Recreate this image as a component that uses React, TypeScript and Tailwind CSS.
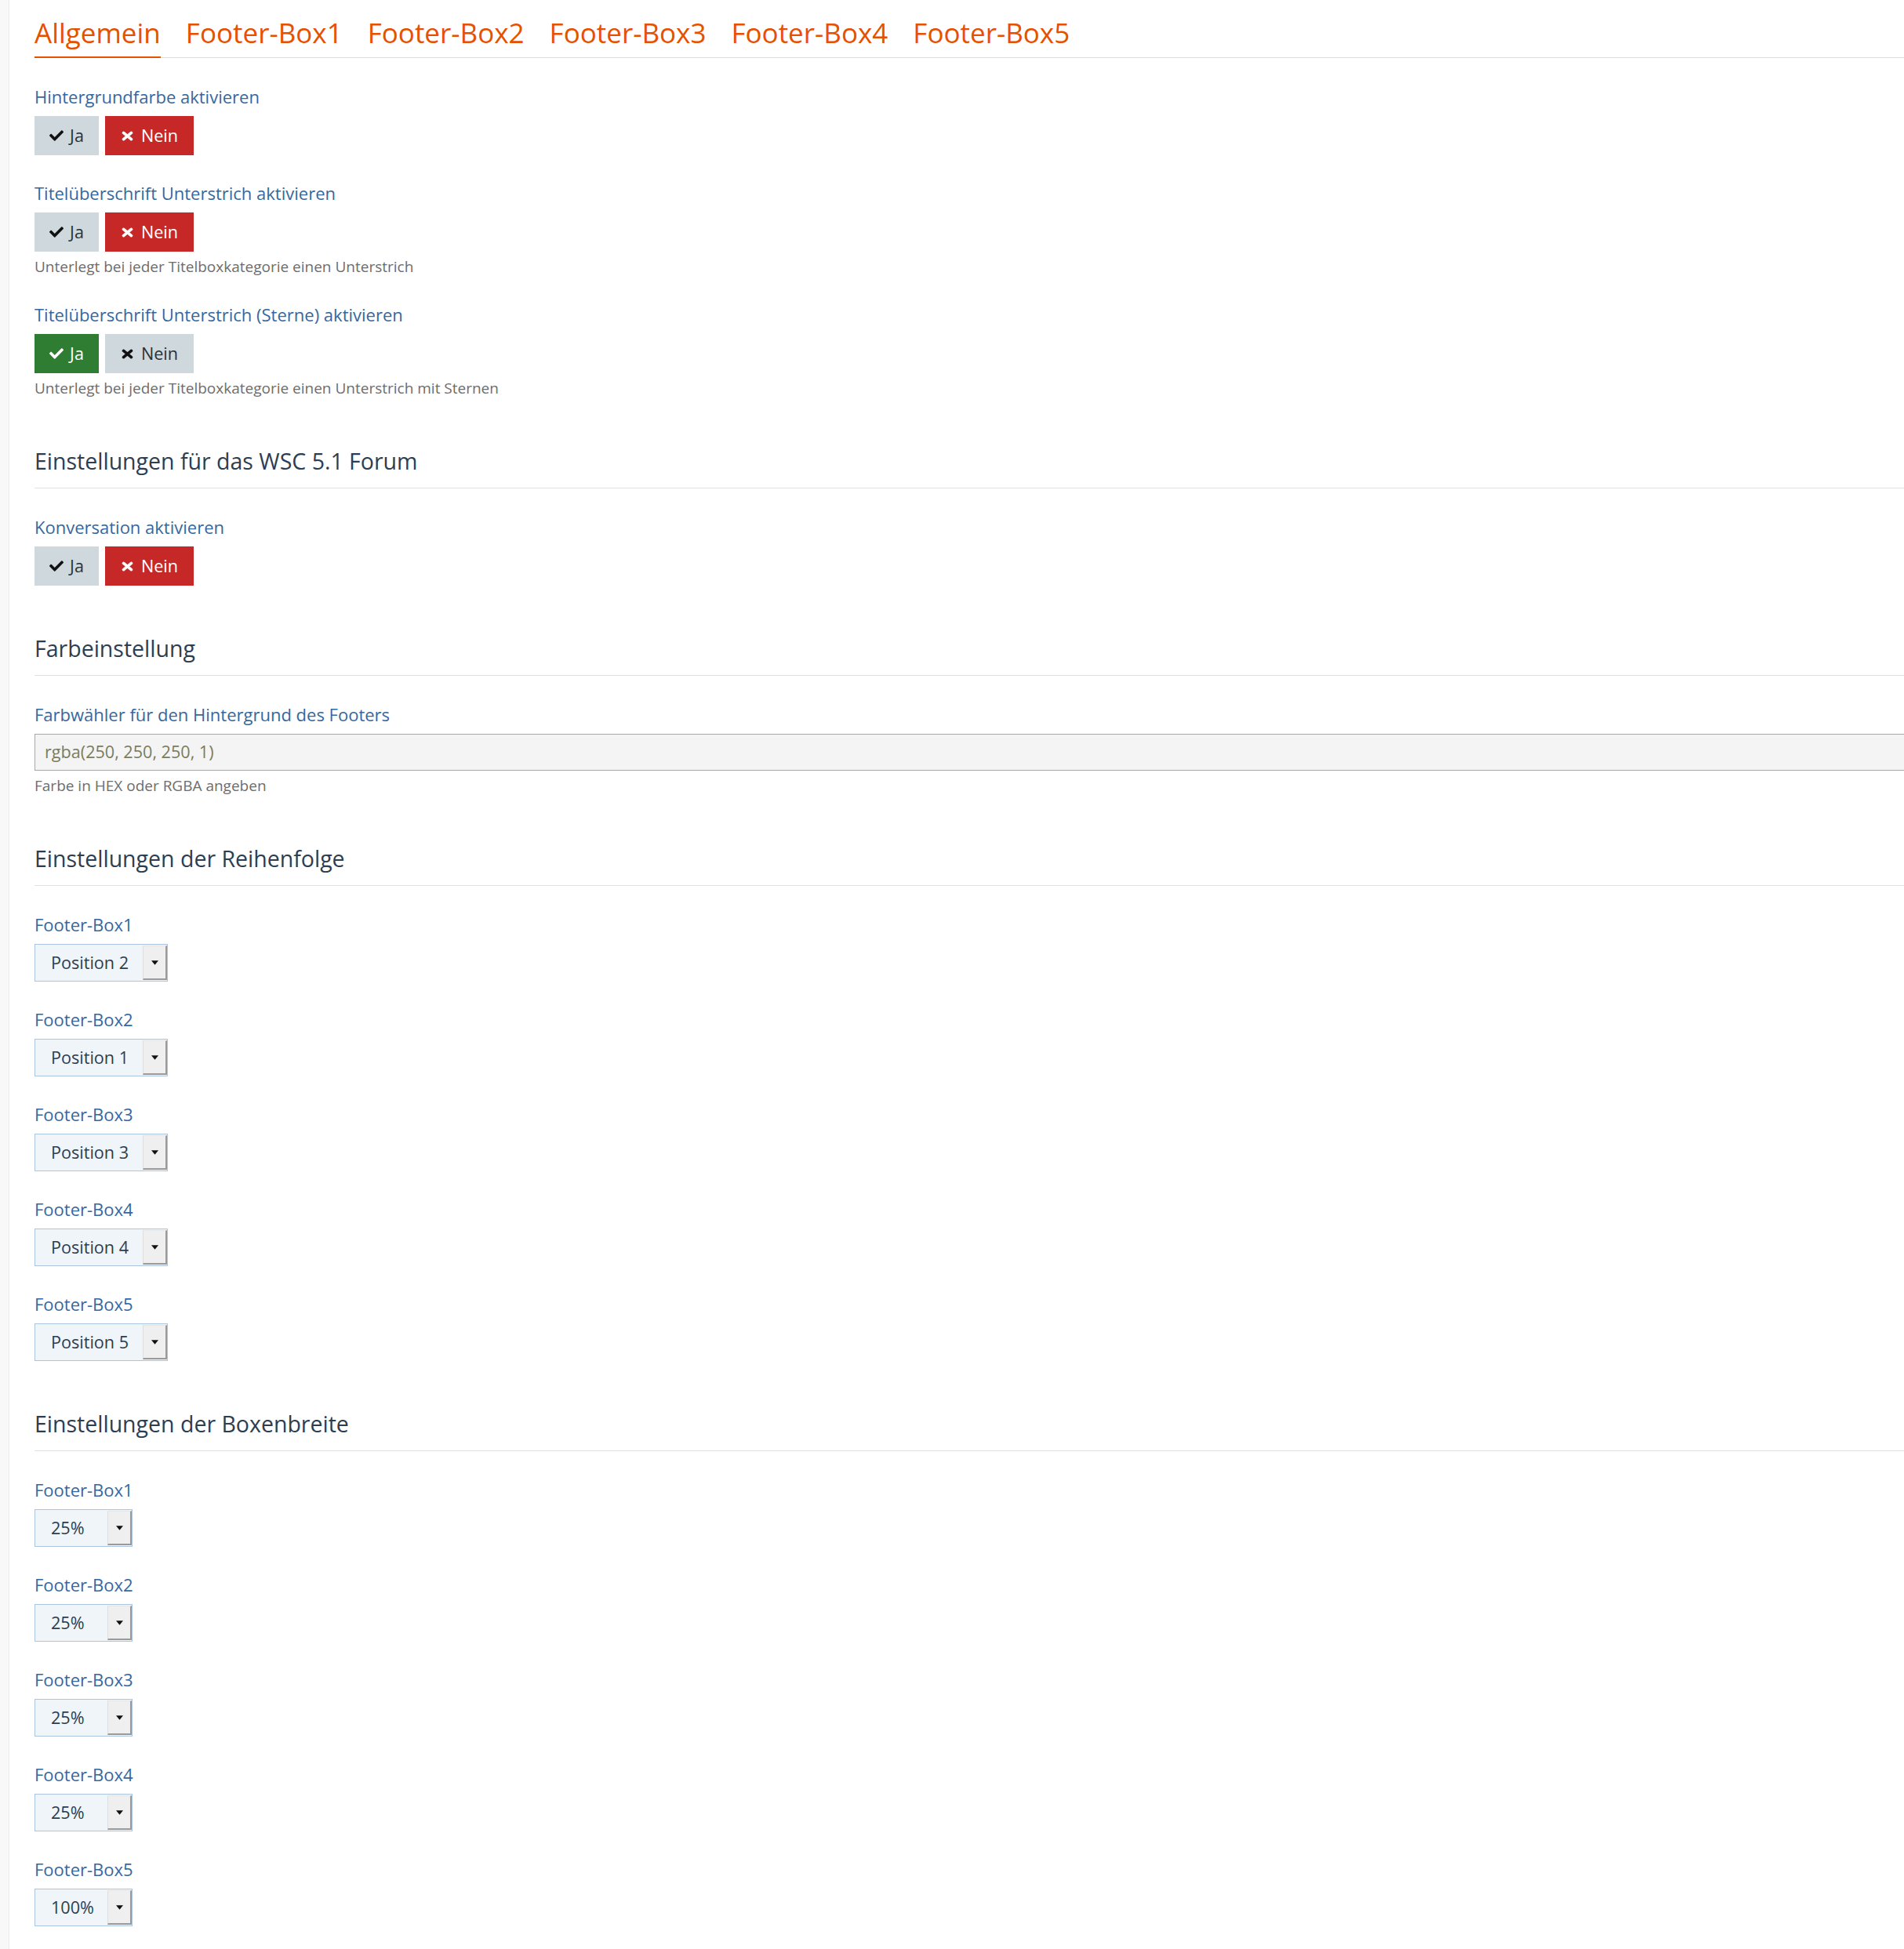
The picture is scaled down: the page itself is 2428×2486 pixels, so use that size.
import { ReactNode } from "react";
import { FaCheck } from "react-icons/fa";

/* ---------------- SMALL PARTS ---------------- */

function TimesIcon({ className }: { className?: string }) {
  return (
    <svg viewBox="0 0 17 14" className={className} aria-hidden>
      <path
        d="M3.2 2.6 L13.8 11.4 M13.8 2.6 L3.2 11.4"
        stroke="currentColor"
        strokeWidth="4"
        strokeLinecap="round"
        fill="none"
      />
    </svg>
  );
}

function Label({ children }: { children: ReactNode }) {
  return (
    <div className="text-[22px] leading-[30px] text-[#35689f]">{children}</div>
  );
}

function Hint({ children }: { children: ReactNode }) {
  return (
    <p className="mt-[6px] text-[19px] leading-[26px] text-[#6d6d6d]">{children}</p>
  );
}

function Toggle({ value }: { value: "ja" | "nein" }) {
  const ja = value === "ja";
  return (
    <div className="mt-[10px] flex gap-[8px] text-[21.6px]">
      <button
        className={
          ja
            ? "flex h-[50px] w-[82px] items-center justify-center gap-[8px] bg-[#2e7d32] text-white"
            : "flex h-[50px] w-[82px] items-center justify-center gap-[8px] bg-[#cfd8dc] text-[#263238]"
        }
      >
        <FaCheck className={ja ? "size-[18px] text-white" : "size-[18px] text-[#111]"} />
        <span>Ja</span>
      </button>
      <button
        className={
          !ja
            ? "flex h-[50px] w-[113px] items-center justify-center gap-[9px] bg-[#c62828] text-white"
            : "flex h-[50px] w-[113px] items-center justify-center gap-[9px] bg-[#cfd8dc] text-[#263238]"
        }
      >
        <TimesIcon className={!ja ? "h-[13px] w-[17px] text-white" : "h-[13px] w-[17px] text-[#111]"} />
        <span>Nein</span>
      </button>
    </div>
  );
}

function Select({ value, wide }: { value: string; wide?: boolean }) {
  return (
    <div
      className={
        wide
          ? "mt-[10px] flex h-[48px] w-[170px] border border-[#abc4e0] bg-[#f0f5fa]"
          : "mt-[10px] flex h-[48px] w-[125px] border border-[#abc4e0] bg-[#f0f5fa]"
      }
    >
      <span className="flex flex-1 items-center pl-[20px] text-[21.6px] text-[#2c3e50]">
        {value}
      </span>
      <span className="my-[1px] flex w-[31px] items-center justify-center border-l border-t border-b-2 border-r-2 border-l-[#dedede] border-t-[#e6e6e6] border-b-[#9a9a9a] border-r-[#9a9a9a] bg-[#efefef]">
        <svg viewBox="0 0 8 5" className="h-[6px] w-[9px]" aria-hidden>
          <path d="M0 0 H8 L4 5 Z" fill="#111" />
        </svg>
      </span>
    </div>
  );
}

function Section({ title, children }: { title: string; children: ReactNode }) {
  return (
    <section className="mt-[60px]">
      <h2 className="border-b border-[#e2e2e2] pb-[14px] text-[28.5px] leading-[40px] text-[#2c3e50]">
        {title}
      </h2>
      <div className="mt-[34px] flex flex-col gap-[33px]">{children}</div>
    </section>
  );
}

/* ---------------- DATA ---------------- */

const tabs = ["Allgemein", "Footer-Box1", "Footer-Box2", "Footer-Box3", "Footer-Box4", "Footer-Box5"];

const order = [
  { box: "Footer-Box1", value: "Position 2" },
  { box: "Footer-Box2", value: "Position 1" },
  { box: "Footer-Box3", value: "Position 3" },
  { box: "Footer-Box4", value: "Position 4" },
  { box: "Footer-Box5", value: "Position 5" },
];

const widths = [
  { box: "Footer-Box1", value: "25%" },
  { box: "Footer-Box2", value: "25%" },
  { box: "Footer-Box3", value: "25%" },
  { box: "Footer-Box4", value: "25%" },
  { box: "Footer-Box5", value: "100%" },
];

/* ---------------- PAGE ---------------- */

export default function App() {
  return (
    <div className="flex min-h-[2486px] bg-white font-['Open_Sans',sans-serif]">
      <div className="w-[12px] shrink-0 border-r border-[#ececec] bg-[#f8f8f8]" />

      <main className="flex-1 pl-[32px] pt-[18px]">
        {/* TABS */}
        <ul className="flex gap-[32px] border-b border-[#dddddd]">
          {tabs.map((t, i) => (
            <li
              key={t}
              className={
                i === 0
                  ? "-mb-px border-b-2 border-[#e65100] pb-[6px] text-[35px] leading-[48px] text-[#e65100]"
                  : "-mb-px border-b-2 border-transparent pb-[6px] text-[35px] leading-[48px] text-[#e65100]"
              }
            >
              {t}
            </li>
          ))}
        </ul>

        {/* GENERAL */}
        <div className="mt-[34px] flex flex-col gap-[33px]">
          <div>
            <Label>Hintergrundfarbe aktivieren</Label>
            <Toggle value="nein" />
          </div>
          <div>
            <Label>Titelüberschrift Unterstrich aktivieren</Label>
            <Toggle value="nein" />
            <Hint>Unterlegt bei jeder Titelboxkategorie einen Unterstrich</Hint>
          </div>
          <div>
            <Label>Titelüberschrift Unterstrich (Sterne) aktivieren</Label>
            <Toggle value="ja" />
            <Hint>Unterlegt bei jeder Titelboxkategorie einen Unterstrich mit Sternen</Hint>
          </div>
        </div>

        <Section title="Einstellungen für das WSC 5.1 Forum">
          <div>
            <Label>Konversation aktivieren</Label>
            <Toggle value="nein" />
          </div>
        </Section>

        <Section title="Farbeinstellung">
          <div>
            <Label>Farbwähler für den Hintergrund des Footers</Label>
            <div className="mt-[10px] flex h-[47px] items-center border border-r-0 border-[#a8a8a8] bg-[#f4f4f4] pl-[12px] text-[21.6px] text-[#7a7d5d]">
              rgba(250, 250, 250, 1)
            </div>
            <Hint>Farbe in HEX oder RGBA angeben</Hint>
          </div>
        </Section>

        <Section title="Einstellungen der Reihenfolge">
          {order.map((o) => (
            <div key={o.box}>
              <Label>{o.box}</Label>
              <Select value={o.value} wide />
            </div>
          ))}
        </Section>

        <Section title="Einstellungen der Boxenbreite">
          {widths.map((w) => (
            <div key={w.box}>
              <Label>{w.box}</Label>
              <Select value={w.value} />
            </div>
          ))}
        </Section>
      </main>
    </div>
  );
}
